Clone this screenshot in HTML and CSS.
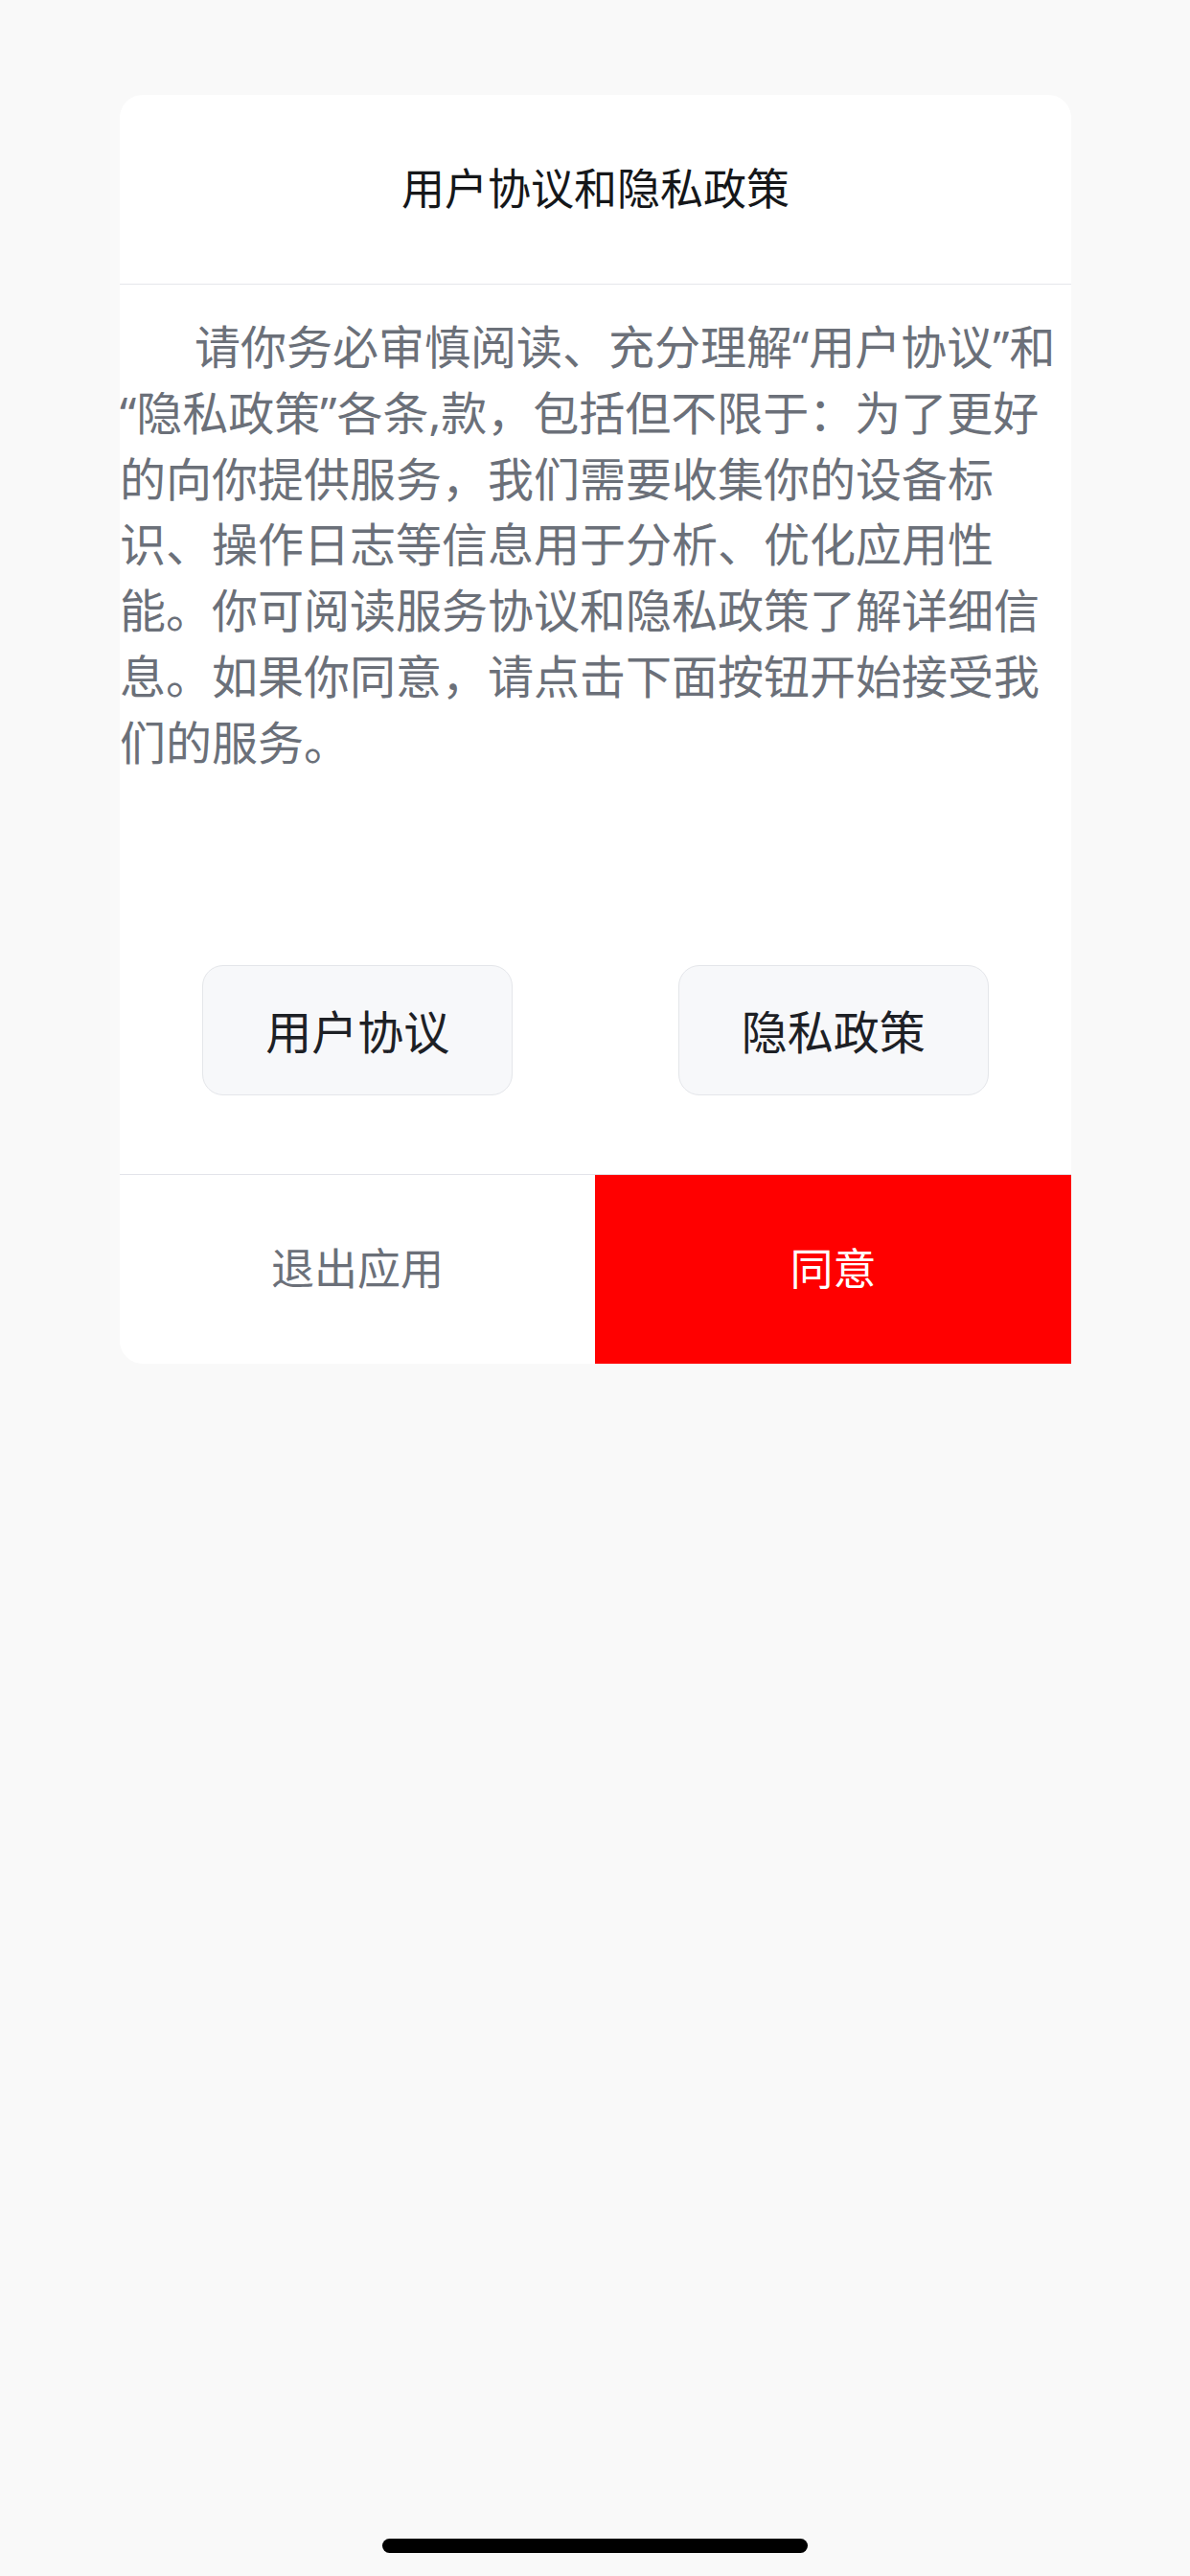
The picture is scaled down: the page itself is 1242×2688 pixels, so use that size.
FILE: index.html
```html
<!DOCTYPE html>
<html lang="zh-CN">
<head>
<meta charset="utf-8">
<title>用户协议和隐私政策</title>
<link rel="stylesheet" href="styles.css">
</head>
<body>
<div class="screen">
  <div class="card">
    <div class="card-header">用户协议和隐私政策</div>
    <div class="card-body">
      <p class="notice">请你务必审慎阅读、充分理解“用户协议”和“隐私政策”各条,款，包括但不限于：为了更好的向你提供服务，我们需要收集你的设备标识、操作日志等信息用于分析、优化应用性能。你可阅读服务协议和隐私政策了解详细信息。如果你同意，请点击下面按钮开始接受我们的服务。</p>
      <div class="links">
        <div class="link-btn">用户协议</div>
        <div class="link-btn">隐私政策</div>
      </div>
    </div>
    <div class="card-footer">
      <div class="footer-btn exit">退出应用</div>
      <div class="footer-btn agree">同意</div>
    </div>
  </div>
  <div class="home-indicator"></div>
</div>
</body>
</html>
```
FILE: styles.css
```css
html, body {
  margin: 0;
  padding: 0;
}
body {
  background: #f9f9f9;
  font-family: "Noto Sans", "Noto Sans CJK SC", sans-serif;
}
.screen {
  position: relative;
  width: 1242px;
  height: 2688px;
  padding-top: 99px;
  box-sizing: border-box;
}
.card {
  width: 993px;
  margin-left: 125px;
  background: #ffffff;
  border-radius: 24px;
}
.card-header {
  height: 198px;
  box-sizing: border-box;
  padding-bottom: 6px;
  border-bottom: 1px solid #e5e7eb;
  display: flex;
  align-items: center;
  justify-content: center;
  font-size: 45px;
  color: #15171a;
}
.card-body {
  display: flex;
  flex-direction: column;
  padding-top: 31px;
  padding-bottom: 82px;
}
.notice {
  margin: 0;
  font-size: 48px;
  line-height: 68.8px;
  color: #6b7079;
  text-indent: 78px;
}
.links {
  margin-top: 197px;
  display: grid;
  grid-template-columns: 1fr 1fr;
  justify-items: center;
}
.link-btn {
  width: 324px;
  height: 136px;
  box-sizing: border-box;
  border: 1px solid #e4e6ea;
  background: #f7f8fa;
  border-radius: 22px;
  display: flex;
  align-items: center;
  justify-content: center;
  padding-bottom: 2px;
  font-size: 48px;
  color: #1d2025;
}
.card-footer {
  border-top: 1px solid #e3e4ea;
  display: grid;
  grid-template-columns: 496px 497px;
  height: 197px;
}
.footer-btn {
  display: flex;
  align-items: center;
  justify-content: center;
  padding-bottom: 5px;
  font-size: 45px;
}
.exit {
  color: #6b7079;
}
.agree {
  background: #ff0000;
  color: #ffffff;
}
.home-indicator {
  position: absolute;
  left: 399px;
  bottom: 24px;
  width: 444px;
  height: 15px;
  border-radius: 8px;
  background: #000000;
}
```
